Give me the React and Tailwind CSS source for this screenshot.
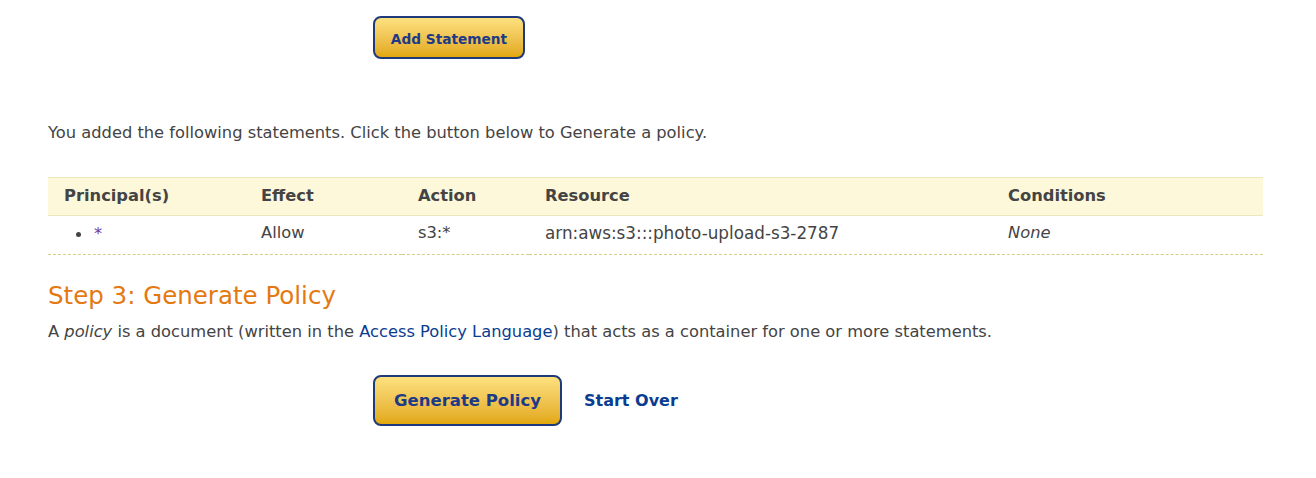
export default function App() {
  const font = { fontFamily: '"DejaVu Sans", Verdana, sans-serif' };
  return (
    <div className="w-[1316px] h-[478px] bg-white text-[#444] text-[16.3px]" style={font}>
      {/* Add statement button */}
      <div className="pt-4 pl-[373px]">
        <button className="h-[43px] w-[152px] pt-[3px] rounded-lg border-2 border-[#1f3a7a] bg-gradient-to-b from-[#fde17e] to-[#e2a806] text-[13.7px] font-bold text-[#1e3a86]">
          Add Statement
        </button>
      </div>

      <div className="pl-12 pr-[53px]">
        <p className="mt-[64px] leading-5">
          You added the following statements. Click the button below to Generate a policy.
        </p>

        <table className="mt-[34px] w-full border-collapse text-left">
          <thead>
            <tr className="h-[38px] bg-[#fcf8d9] border-t border-b border-[#ece7bf]">
              <th className="w-[197px] pl-4 font-bold">Principal(s)</th>
              <th className="w-[157px] pl-4 font-bold">Effect</th>
              <th className="w-[127px] pl-4 font-bold">Action</th>
              <th className="w-[463px] pl-4 font-bold">Resource</th>
              <th className="pl-4 font-bold">Conditions</th>
            </tr>
          </thead>
          <tbody>
            <tr className="h-[39px] border-b border-dashed border-[#cfcf8a] [&>td]:pb-[3px]">
              <td className="pl-[28px]">
                <span className="inline-flex items-center gap-[13px]">
                  <span className="inline-block w-[5px] h-[5px] rounded-full bg-[#444]" />
                  <span className="text-[#6b3a9c]">*</span>
                </span>
              </td>
              <td className="pl-4">Allow</td>
              <td className="pl-4">s3:*</td>
              <td className="pl-4 text-[16.8px]">arn:aws:s3:::photo-upload-s3-2787</td>
              <td className="pl-4 italic">None</td>
            </tr>
          </tbody>
        </table>

        <h2 className="mt-[25px] text-[24.5px] leading-8 text-[#e47911]">Step 3: Generate Policy</h2>
        <p className="mt-[10px] leading-5">
          A <em>policy</em> is a document (written in the{' '}
          <span className="text-[#0a3d91]">Access Policy Language</span>) that acts as a container for one or more statements.
        </p>
      </div>

      <div className="mt-[33px] pl-[373px] flex items-center gap-[22px]">
        <button className="h-[51px] w-[189px] pt-[2px] rounded-lg border-2 border-[#1f3a7a] bg-gradient-to-b from-[#fde17e] to-[#e2a806] text-[16.5px] font-bold text-[#1e3a86]">
          Generate Policy
        </button>
        <span className="text-[16px] font-bold text-[#0a3d91]">Start Over</span>
      </div>
    </div>
  );
}
